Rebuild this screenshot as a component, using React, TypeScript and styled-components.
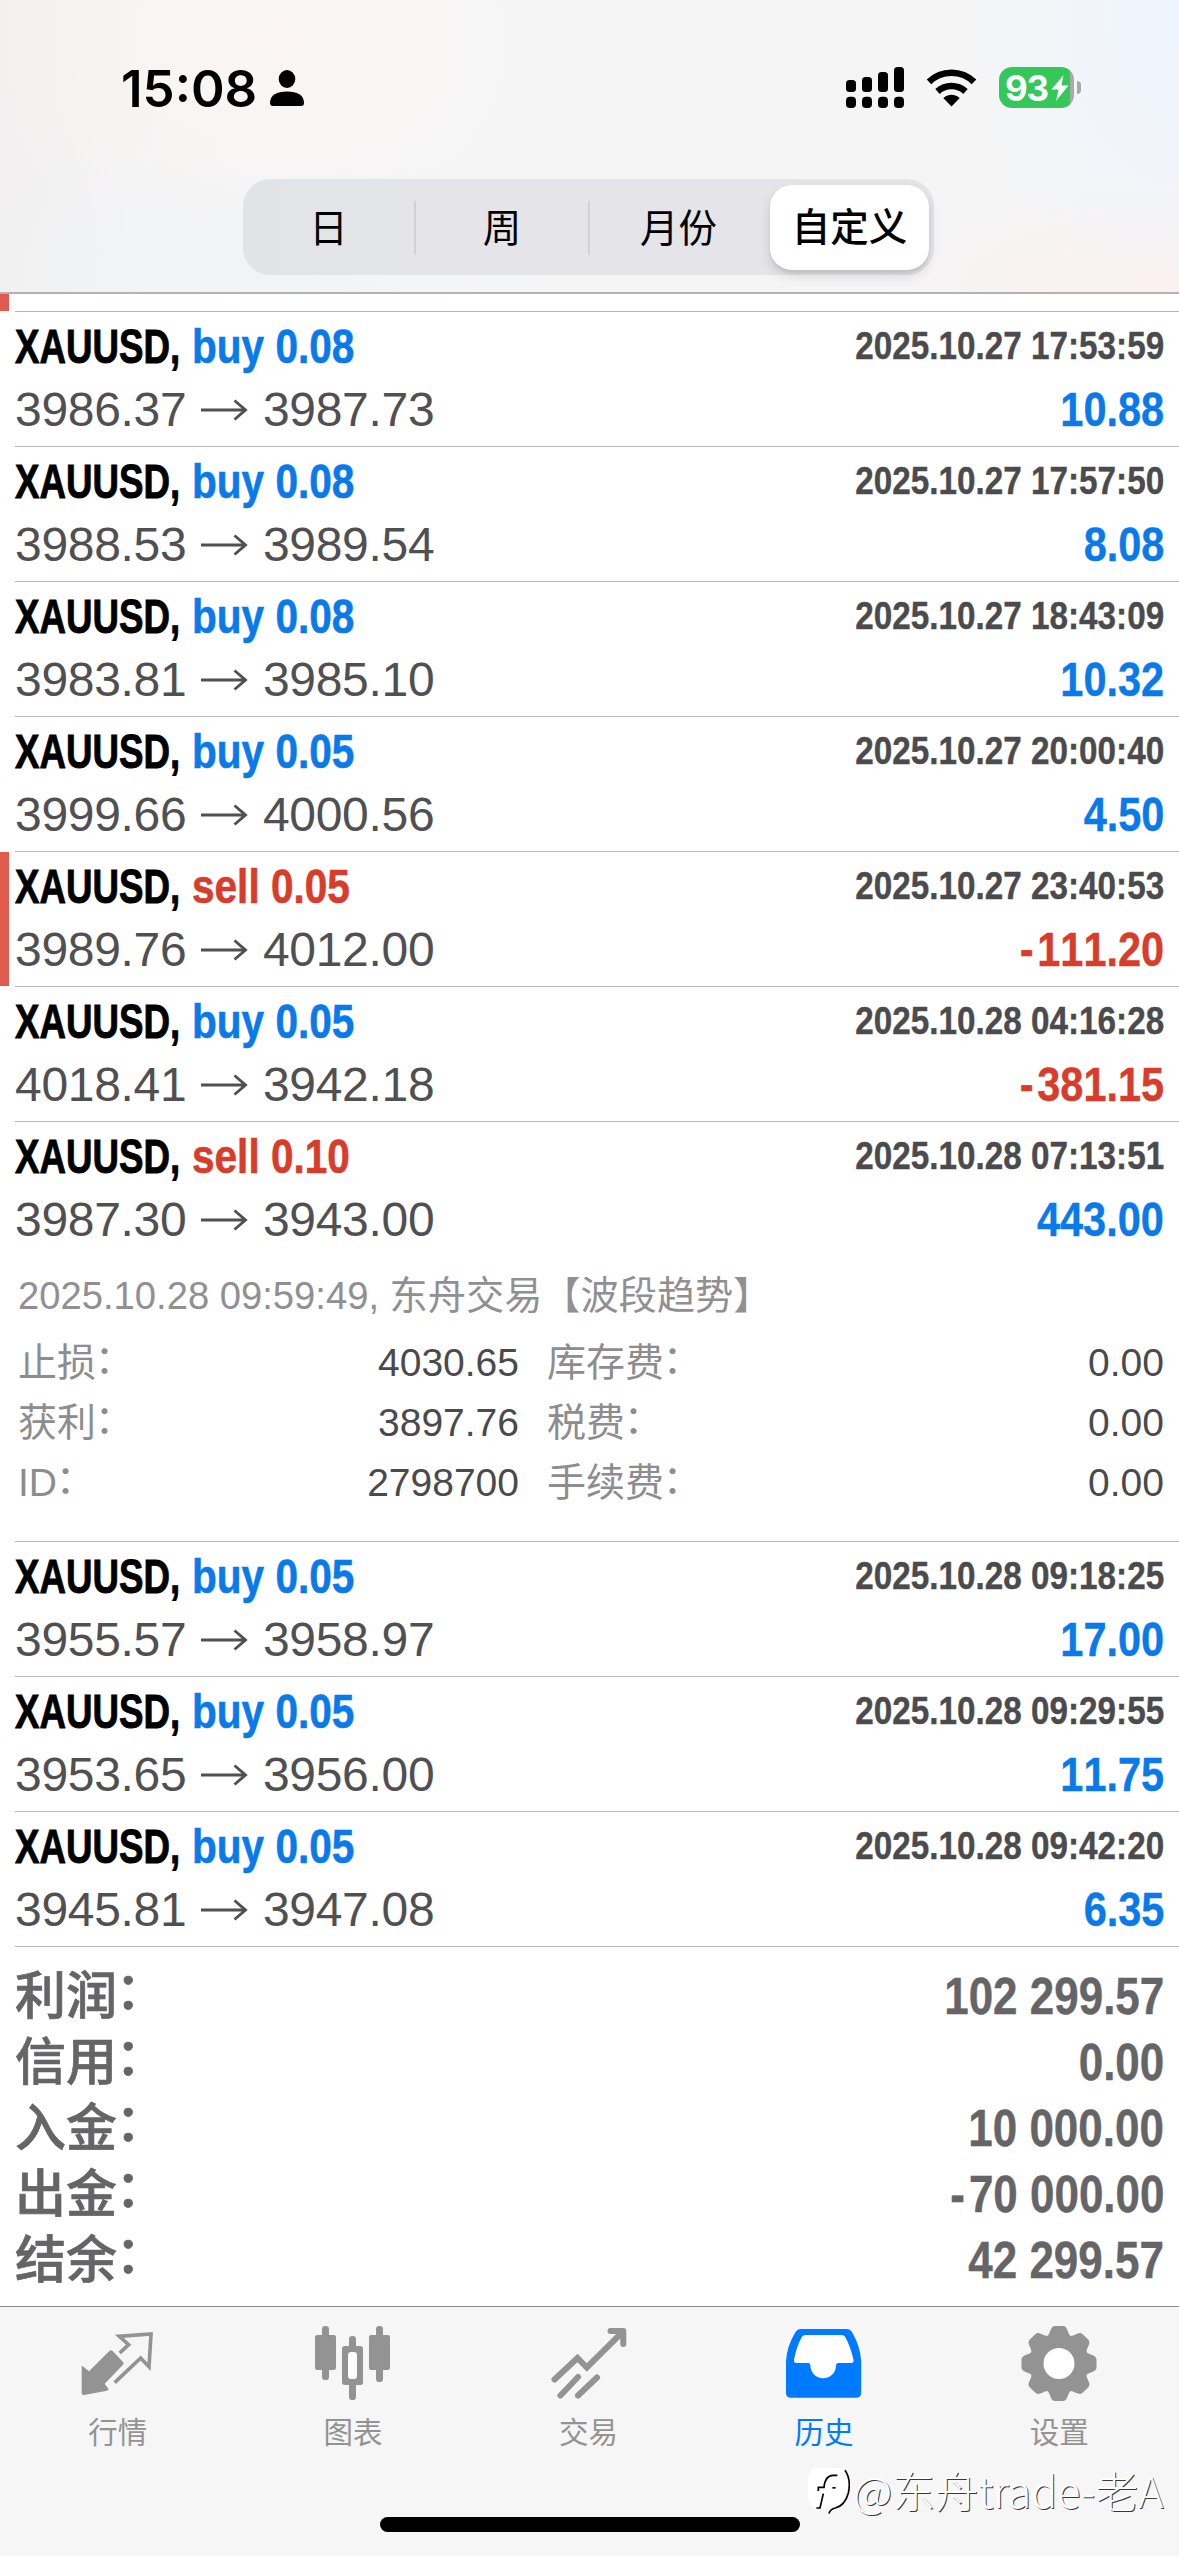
import React from "react";
import styled, { createGlobalStyle, css } from "styled-components";

const latin = `"Liberation Sans", "Noto Sans CJK SC", sans-serif`;
const blue = "#0a7aea";
const red = "#d83c2b";

const GlobalStyle = createGlobalStyle`
  body { margin: 0; background: #fff; }
  * { box-sizing: border-box; }
`;

const Screen = styled.div`
  position: relative;
  width: 1179px;
  height: 2556px;
  overflow: hidden;
  background: #fff;
  font-family: ${latin};
  display: flex;
  flex-direction: column;
`;

const Header = styled.header`
  height: 294px;
  flex: none;
  border-bottom: 2px solid #b3b3b5;
  background:
    radial-gradient(ellipse 300px 230px at 270px 40px, rgba(251, 246, 243, 0.9), transparent),
    radial-gradient(ellipse 200px 300px at 1179px 20px, rgba(238, 244, 255, 0.95), transparent),
    radial-gradient(ellipse 300px 110px at 1179px 290px, rgba(253, 239, 236, 0.85), transparent),
    radial-gradient(ellipse 300px 160px at 240px 270px, rgba(240, 244, 248, 0.8), transparent),
    linear-gradient(90deg, #f2f0f0, #f5f5f6 25%, #f5f5f6);
`;

const StatusBar = styled.div`
  height: 179px;
  padding: 66px 98px 0 121px;
  display: flex;
  justify-content: space-between;
  align-items: flex-start;
`;

const StatusSide = styled.div`
  display: flex;
  align-items: flex-start;
`;

const Clock = styled.span`
  font: 600 51px/45px Inter, sans-serif;
  letter-spacing: 0;
  width: 148px;
  white-space: nowrap;
  color: #000;
`;

const Segments = styled.nav`
  width: 691px;
  height: 96px;
  margin-left: 243px;
  padding: 6px 5px 5px 0;
  border-radius: 27px;
  background: linear-gradient(90deg, #e1e4e7, #e5e4e9 30%, #e5e5e9);
  display: flex;
  align-items: center;
`;

const Segment = styled.button<{ $width: number; $divided?: boolean; $on?: boolean }>`
  width: ${(p) => p.$width}px;
  height: 54px;
  border: 0;
  padding: 0;
  border-right: ${(p) => (p.$divided ? "2px solid #d2d2d6" : "0")};
  background: none;
  color: #000;
  font: 400 38.5px/55px ${latin};
  ${(p) =>
    p.$on &&
    css`
      height: 85px;
      margin-left: auto;
      border-radius: 22px;
      background: #fff;
      font-weight: 500;
      line-height: 86px;
      box-shadow: 0 6px 12px rgba(0, 0, 0, 0.12), 0 3px 3px rgba(0, 0, 0, 0.06);
    `}
`;

const PreviousRow = styled.div`
  height: 18px;
  flex: none;
  display: flex;
`;

const Flag = styled.i`
  width: 9px;
  height: 17px;
  margin-right: 6px;
  background: #e05b4d;
`;

const Line = styled.i`
  flex: 1;
  align-self: flex-end;
  height: 1px;
  background: #b8b8bb;
`;

const Row = styled.div<{ $loss?: boolean }>`
  flex: none;
  display: flex;
  ${(p) => p.$loss && css`background: linear-gradient(#e05b4d, #e05b4d) 0 0 / 9px 134px no-repeat;`}
`;

const RowBody = styled.div`
  margin-left: 15px;
  flex: 1;
  min-height: 135px;
  padding: 3px 15px 5px 0;
  border-bottom: 1px solid #b8b8bb;
`;

const Split = styled.div`
  height: 63px;
  display: flex;
  align-items: center;
  line-height: 63px;
  white-space: nowrap;
`;

const Squeezed = styled.span<{ $k: number; $side?: "left" | "right" }>`
  display: block;
  font-weight: 700;
  font-kerning: none;
  transform: scaleX(${(p) => p.$k});
  transform-origin: ${(p) => p.$side ?? "left"} center;
`;

const SymbolName = styled(Squeezed)`
  width: 176.5px;
  font-size: 48px;
  font-kerning: normal;
  color: #000;
  -webkit-text-stroke: 0.9px #000;
`;

const Side = styled(Squeezed)<{ $sell: boolean }>`
  font-size: 48px;
  color: ${(p) => (p.$sell ? red : blue)};
  -webkit-text-stroke: 0.6px currentColor;
`;

const Time = styled(Squeezed)`
  margin-left: auto;
  font-size: 39px;
  line-height: 61px;
  height: 63px;
  color: #4b4b4d;
  -webkit-text-stroke: 0.4px currentColor;
`;

const Price = styled.span`
  font-size: 48px;
  font-kerning: none;
  letter-spacing: -0.3px;
  color: #505052;
`;

const ArrowBox = styled.span`
  width: 76.5px;
  height: 63px;
  padding-left: 14px;
  display: flex;
  align-items: center;
  color: #505052;
`;

const Arrow = () => (
  <ArrowBox>
    <svg width="48" height="24" viewBox="0 0 48 24" fill="none" stroke="currentColor" strokeWidth="2.900">
      <path d="M1 12H45.500M34.500 2.500L45.500 12L34.500 21.500" />
    </svg>
  </ArrowBox>
);

const Result = styled(Squeezed)<{ $negative: boolean }>`
  margin-left: auto;
  font-size: 48px;
  color: ${(p) => (p.$negative ? red : blue)};
  -webkit-text-stroke: 0.4px currentColor;
`;

const Amount = styled(Squeezed)`
  font-size: 51px;
  -webkit-text-stroke: 0.4px currentColor;
`;

const Minus = styled.span`
  letter-spacing: 0.09em;
`;

const Colon = styled.span`
  margin-left: -0.03em;
  vertical-align: 0.09em;
  line-height: 0;
`;

const Comment = styled.div`
  margin: 14px 0 7px 3px;
  font-size: 38.2px;
  line-height: 61px;
  height: 60px;
  color: #909092;
  white-space: nowrap;
`;

const Details = styled.dl`
  margin: 0 0 24px 3px;
  display: grid;
  grid-template-columns: 250px 251px 278px 367px;
  grid-auto-rows: 60px;
  font-size: 39px;
  line-height: 62px;
`;

const Term = styled.dt<{ $second?: boolean }>`
  color: #8d8d90;
  padding-left: ${(p) => (p.$second ? 28 : 0)}px;
`;

const Value = styled.dd`
  margin: 0;
  text-align: right;
  color: #4a4a4c;
`;

const Summary = styled.section`
  flex: none;
  height: 359px;
  padding: 16px 15px 0;
`;

const SummaryRow = styled.div`
  height: 66px;
  display: flex;
  justify-content: space-between;
  line-height: 67px;
  color: #656567;
  white-space: nowrap;
`;

const SummaryLabel = styled.span`
  font-size: 51px;
  font-weight: 500;
  -webkit-text-stroke: 0.7px currentColor;
`;

const TabBar = styled.nav`
  flex: 1;
  border-top: 1px solid #8b8b8d;
  background: #f6f6f6;
  padding: 15px 2px 0 0;
  display: flex;
  align-items: flex-start;
`;

const Tab = styled.button<{ $on?: boolean }>`
  flex: 1;
  border: 0;
  padding: 0;
  background: none;
  display: flex;
  flex-direction: column;
  align-items: center;
  gap: 10px;
  font: 400 29.5px/41px ${latin};
  color: ${(p) => (p.$on ? "#007aff" : "#939393")};
`;

const HomeIndicator = styled.div`
  position: absolute;
  left: 380px;
  bottom: 24px;
  width: 420px;
  height: 15px;
  border-radius: 8px;
  background: #000;
`;

const Watermark = styled.div`
  position: absolute;
  left: 806px;
  top: 2461px;
  display: flex;
  align-items: center;
  gap: 3px;
  white-space: nowrap;
  font: 300 43px/56px "Noto Sans CJK SC", sans-serif;
  color: #fff;
  text-shadow: 1px 1px 0 #3a3a3a;
`;

const WatermarkText = styled.span`
  height: 60px;
`;

const PersonIcon = () => (
  <svg width="36" height="44" viewBox="0 0 36 44">
    <ellipse cx="18" cy="13" rx="8.3" ry="9" />
    <path d="M1 37C1 29 8 25.500 18 25.500S35 29 35 37Q35 40 32 40H4Q1 40 1 37Z" />
  </svg>
);

const SignalIcon = () => (
  <svg width="80" height="44" viewBox="846 66 80 44">
    {[80, 77, 72, 67].map((y, i) => (
      <g key={y}>
        <rect x={846 + i * 16} y={y} width="10" height={92 - y} rx="3.500" />
        <rect x={846 + i * 16} y="96.700" width="10" height="11.300" rx="4" />
      </g>
    ))}
  </svg>
);

const WifiIcon = () => (
  <svg width="52" height="44" viewBox="926 66 52 44">
    <path d="M951.500 106.500L943.700 98.600Q943.300 98 944 97.400C948.500 93.700 954.500 93.700 959 97.400Q959.700 98 959.300 98.600Z" />
    <g fill="none" stroke="#000">
      <path d="M937.500 91.500C945.500 84.200 957.500 84.200 965.500 91.500" strokeWidth="6.500" />
      <path d="M929 81.800C941.500 69.600 961.500 69.600 974 81.800" strokeWidth="6.500" />
    </g>
  </svg>
);

const Battery = styled.div`
  width: 75px;
  height: 41px;
  margin: 1px 0 0 21px;
  padding-left: 6px;
  border-radius: 13px;
  background: linear-gradient(90deg, #34c759 71px, #a9a9ab 71px);
  display: flex;
  align-items: center;
  gap: 3px;
  font: 700 35px/42px Inter, sans-serif;
  letter-spacing: -1.2px;
  color: #fff;
`;

const BatteryTip = styled.i`
  width: 4px;
  height: 13px;
  margin: 15px 0 0 3px;
  border-radius: 0 6px 6px 0;
  background: #a9a9ab;
`;

const BoltIcon = () => (
  <svg width="18" height="28" viewBox="0 0 18 28">
    <path d="M12.500 1L0.500 15.500H7.500L5 27L17.500 11.500H10.500Z" fill="#fff" />
  </svg>
);

const QuotesIcon = () => (
  <svg width="90" height="80" viewBox="38 36 270 240" fill="currentColor">
    <path d="M147 123Q152 118 157 123L188 156Q192 160 188 164L133 221L144 236Q146 241 140 242L71 255Q64 256 64 249V172Q64 165 69 170L86 184Z" />
    <path d="M178 129L205 104L177 79L272 72L266 170L241 144L163 218" fill="none" stroke="currentColor" strokeWidth="11" />
  </svg>
);

const ChartIcon = () => (
  <svg width="90" height="80" viewBox="744 36 270 240" fill="currentColor">
    <rect x="765" y="75" width="63" height="105" rx="7" />
    <rect x="786" y="48" width="21" height="162" rx="10" />
    <rect x="927" y="75" width="63" height="105" rx="7" />
    <rect x="948" y="48" width="21" height="168" rx="10" />
    <rect x="867" y="78" width="21" height="192" rx="10" />
    <rect x="846" y="108" width="63" height="117" rx="8" />
    <rect x="864" y="126" width="27" height="81" rx="10" fill="#fff" />
  </svg>
);

const TradeIcon = () => (
  <svg width="90" height="80" viewBox="543.500 2322 90 80" fill="none" stroke="currentColor" strokeWidth="6" strokeLinecap="round">
    <path d="M554 2379.500L577 2358L586.300 2367.500L622 2332" />
    <path d="M610 2331H622.800V2344" strokeLinejoin="round" />
    <path d="M577.500 2377L560 2395.500M596.500 2377.500L577.500 2395.500" />
  </svg>
);

const HistoryIcon = () => (
  <svg width="90" height="80" viewBox="779 2322 90 80" fill="currentColor">
    <path d="M786 2361Q787 2346 795 2333Q797 2329 801 2329H846.500Q850.500 2329 852.500 2333Q860 2346 861.200 2361V2393Q861.200 2397.700 856 2397.700H791Q786 2397.700 786 2393Z" />
    <path
      fill="#fff"
      d="M805 2335H842Q844.500 2335 845.500 2337.500Q851 2348 853.500 2360Q854 2363 851 2363H838Q836 2363 836 2365.500A12.800 12.800 0 0 1 810.400 2365.500Q810.400 2363 808.400 2363H796.500Q793.500 2363 794 2360Q796 2348 801.500 2337.500Q802.500 2335 805 2335Z"
    />
  </svg>
);

const SettingsIcon = () => (
  <svg width="90" height="80" viewBox="-45 -41.500 90 80" fill="currentColor">
    <circle r="30" />
    {[0, 45, 90, 135, 180, 225, 270, 315].map((a) => (
      <path key={a} transform={`rotate(${a})`} d="M-12.500 -26C-8 -30 -9 -37.500 -4 -37.500H4C9 -37.500 8 -30 12.500 -26Z" />
    ))}
    <circle r="15.500" fill="#fff" />
  </svg>
);

const WatermarkLogo = () => (
  <svg width="44" height="50" viewBox="15 85 132 150">
    <path d="M45 90H112Q146 92 146 140Q146 195 112 207L84 228L80 210H40Q20 205 20 150Q20 92 45 90Z" fill="#fff" />
    <g fill="none" stroke="#000" strokeWidth="5">
      <path d="M109 113H96Q72 114 69 149H52V160" />
      <path d="M67 168L57 211H46" />
      <path d="M132 98Q151 125 142 166Q132 204 103 211Q87 214 84 228" />
    </g>
    <rect x="94" y="148" width="10" height="5" fill="#111" />
  </svg>
);

interface Deal {
  side: "buy" | "sell";
  lot: string;
  from: string;
  to: string;
  time: string;
  profit: string;
  flagged?: boolean;
  expanded?: boolean;
}

const deals: Deal[] = [
  { side: "buy", lot: "0.08", from: "3986.37", to: "3987.73", time: "2025.10.27 17:53:59", profit: "10.88" },
  { side: "buy", lot: "0.08", from: "3988.53", to: "3989.54", time: "2025.10.27 17:57:50", profit: "8.08" },
  { side: "buy", lot: "0.08", from: "3983.81", to: "3985.10", time: "2025.10.27 18:43:09", profit: "10.32" },
  { side: "buy", lot: "0.05", from: "3999.66", to: "4000.56", time: "2025.10.27 20:00:40", profit: "4.50" },
  { side: "sell", lot: "0.05", from: "3989.76", to: "4012.00", time: "2025.10.27 23:40:53", profit: "-111.20", flagged: true },
  { side: "buy", lot: "0.05", from: "4018.41", to: "3942.18", time: "2025.10.28 04:16:28", profit: "-381.15" },
  { side: "sell", lot: "0.10", from: "3987.30", to: "3943.00", time: "2025.10.28 07:13:51", profit: "443.00", expanded: true },
  { side: "buy", lot: "0.05", from: "3955.57", to: "3958.97", time: "2025.10.28 09:18:25", profit: "17.00" },
  { side: "buy", lot: "0.05", from: "3953.65", to: "3956.00", time: "2025.10.28 09:29:55", profit: "11.75" },
  { side: "buy", lot: "0.05", from: "3945.81", to: "3947.08", time: "2025.10.28 09:42:20", profit: "6.35" },
];

const details = [
  ["止损", "4030.65", "库存费", "0.00"],
  ["获利", "3897.76", "税费", "0.00"],
  ["ID", "2798700", "手续费", "0.00"],
];

const totals = [
  ["利润", "102 299.57"],
  ["信用", "0.00"],
  ["入金", "10 000.00"],
  ["出金", "-70 000.00"],
  ["结余", "42 299.57"],
];

const tabs = [
  { label: "行情", Icon: QuotesIcon },
  { label: "图表", Icon: ChartIcon },
  { label: "交易", Icon: TradeIcon },
  { label: "历史", Icon: HistoryIcon, on: true },
  { label: "设置", Icon: SettingsIcon },
];

const Signed = ({ value }: { value: string }) =>
  value.startsWith("-") ? (
    <>
      <Minus>-</Minus>
      {value.slice(1)}
    </>
  ) : (
    <>{value}</>
  );

const DealRow = ({ deal }: { deal: Deal }) => (
  <Row $loss={deal.flagged}>
    <RowBody>
      <Split>
        <SymbolName $k={0.765}>XAUUSD,</SymbolName>
        <Side $k={0.845} $sell={deal.side === "sell"}>
          {deal.side} {deal.lot}
        </Side>
        <Time $k={0.853} $side="right">{deal.time}</Time>
      </Split>
      <Split>
        <Price>{deal.from}</Price>
        <Arrow />
        <Price>{deal.to}</Price>
        <Result $k={0.864} $side="right" $negative={deal.profit.startsWith("-")}>
          <Signed value={deal.profit} />
        </Result>
      </Split>
      {deal.expanded && (
        <>
          <Comment>2025.10.28 09:59:49, 东舟交易【波段趋势】</Comment>
          <Details>
            {details.map(([a, b, c, d]) => (
              <React.Fragment key={a}>
                <Term>
                  {a}
                  <Colon>：</Colon>
                </Term>
                <Value>{b}</Value>
                <Term $second>
                  {c}
                  <Colon>：</Colon>
                </Term>
                <Value>{d}</Value>
              </React.Fragment>
            ))}
          </Details>
        </>
      )}
    </RowBody>
  </Row>
);

export default function App() {
  return (
    <Screen>
      <GlobalStyle />
      <Header>
        <StatusBar>
          <StatusSide>
            <Clock>15:08</Clock>
            <PersonIcon />
          </StatusSide>
          <StatusSide>
            <SignalIcon />
            <WifiIcon />
            <Battery>
              93
              <BoltIcon />
            </Battery>
            <BatteryTip />
          </StatusSide>
        </StatusBar>
        <Segments>
          <Segment $width={173} $divided>日</Segment>
          <Segment $width={174} $divided>周</Segment>
          <Segment $width={177}>月份</Segment>
          <Segment $width={159} $on>自定义</Segment>
        </Segments>
      </Header>
      <PreviousRow>
        <Flag />
        <Line />
      </PreviousRow>
      {deals.map((deal) => (
        <DealRow key={deal.time} deal={deal} />
      ))}
      <Summary>
        {totals.map(([label, value]) => (
          <SummaryRow key={label}>
            <SummaryLabel>
              {label}
              <Colon>：</Colon>
            </SummaryLabel>
            <Amount $k={0.862} $side="right">
              <Signed value={value} />
            </Amount>
          </SummaryRow>
        ))}
      </Summary>
      <TabBar>
        {tabs.map(({ label, Icon, on }) => (
          <Tab key={label} $on={on}>
            <Icon />
            {label}
          </Tab>
        ))}
      </TabBar>
      <HomeIndicator />
      <Watermark>
        <WatermarkLogo />
        <WatermarkText>@东舟trade-老A</WatermarkText>
      </Watermark>
    </Screen>
  );
}
